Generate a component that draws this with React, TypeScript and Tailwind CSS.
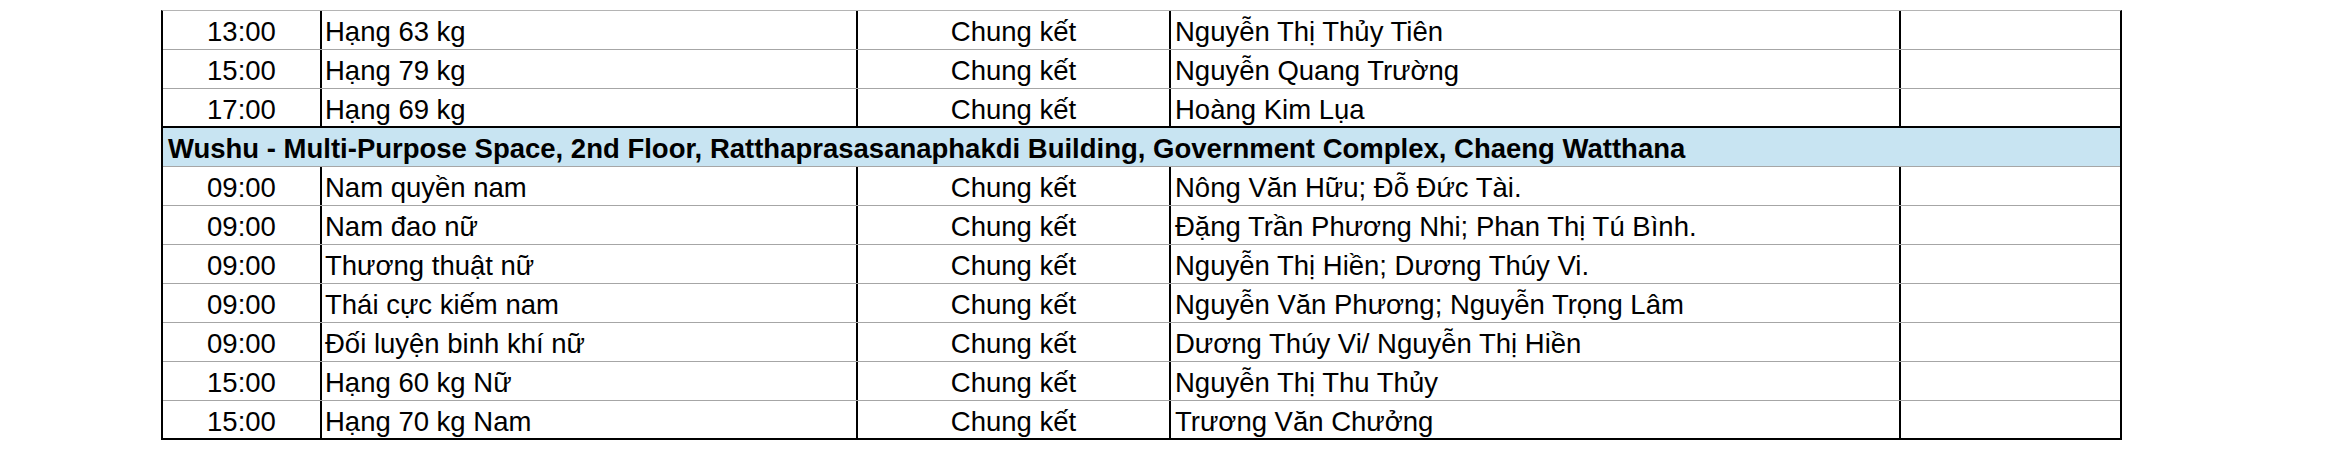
const font = { fontFamily: '"Liberation Sans", Arial, sans-serif' };

type Row = { time: string; event: string; stage: string; athletes: string };

const before: Row[] = [
  { time: "13:00", event: "Hạng 63 kg", stage: "Chung kết", athletes: "Nguyễn Thị Thủy Tiên" },
  { time: "15:00", event: "Hạng 79 kg", stage: "Chung kết", athletes: "Nguyễn Quang Trường" },
  { time: "17:00", event: "Hạng 69 kg", stage: "Chung kết", athletes: "Hoàng Kim Lụa" },
];

const wushu: Row[] = [
  { time: "09:00", event: "Nam quyền nam", stage: "Chung kết", athletes: "Nông Văn Hữu; Đỗ Đức Tài." },
  { time: "09:00", event: "Nam đao nữ", stage: "Chung kết", athletes: "Đặng Trần Phương Nhi; Phan Thị Tú Bình." },
  { time: "09:00", event: "Thương thuật nữ", stage: "Chung kết", athletes: "Nguyễn Thị Hiền; Dương Thúy Vi." },
  { time: "09:00", event: "Thái cực kiếm nam", stage: "Chung kết", athletes: "Nguyễn Văn Phương; Nguyễn Trọng Lâm" },
  { time: "09:00", event: "Đối luyện binh khí nữ", stage: "Chung kết", athletes: "Dương Thúy Vi/ Nguyễn Thị Hiền" },
  { time: "15:00", event: "Hạng 60 kg Nữ", stage: "Chung kết", athletes: "Nguyễn Thị Thu Thủy" },
  { time: "15:00", event: "Hạng 70 kg Nam", stage: "Chung kết", athletes: "Trương Văn Chưởng" },
];

function ScheduleRow({ row, last }: { row: Row; last?: boolean }) {
  return (
    <div
      className={
        "flex h-[39px] text-[27.5px] text-black " +
        (last ? "border-b-2 border-black" : "border-b border-[#a6a6a6]")
      }
    >
      <div className="w-[159px] shrink-0 flex items-center justify-center pt-[4px] border-r-2 border-black">
        {row.time}
      </div>
      <div className="w-[536px] shrink-0 flex items-center pl-[3px] pt-[4px] border-r-2 border-black">
        {row.event}
      </div>
      <div className="w-[313px] shrink-0 flex items-center justify-center pt-[4px] border-r-2 border-black">
        {row.stage}
      </div>
      <div className="w-[730px] shrink-0 flex items-center pl-[4px] pt-[4px] border-r-2 border-black whitespace-nowrap">
        {row.athletes}
      </div>
      <div className="flex-1" />
    </div>
  );
}

export default function App() {
  return (
    <div className="w-[2338px] h-[456px] bg-white overflow-hidden" style={font}>
      <div className="pl-[161px] pt-[10px]">
        <div className="w-[1961px] border-l-2 border-r-2 border-black border-t border-t-[#b4b4b4]">
          {before.map((r, i) => (
            <ScheduleRow key={i} row={r} last={i === before.length - 1} />
          ))}
          <div className="h-[39px] flex items-center pl-[5px] pt-[4px] bg-[#c8e4f2] border-b border-[#a6a6a6] text-[27.5px] font-bold text-black whitespace-nowrap">
            Wushu - Multi-Purpose Space, 2nd Floor, Ratthaprasasanaphakdi Building, Government Complex, Chaeng Watthana
          </div>
          {wushu.map((r, i) => (
            <ScheduleRow key={i} row={r} last={i === wushu.length - 1} />
          ))}
        </div>
      </div>
    </div>
  );
}
